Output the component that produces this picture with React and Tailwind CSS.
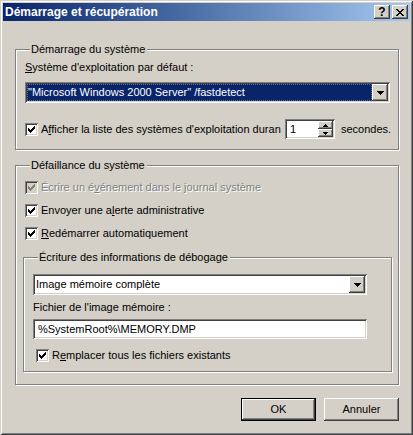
import React from 'react'

const raised = 'shadow-[inset_-1px_-1px_#404040,inset_1px_1px_#ffffff,inset_-2px_-2px_#808080,inset_2px_2px_#d4d0c8]'
const sunken = 'shadow-[inset_1px_1px_#808080,inset_-1px_-1px_#ffffff,inset_2px_2px_#404040,inset_-2px_-2px_#d4d0c8]'
const etched = 'border border-[#808080] shadow-[inset_1px_1px_#ffffff,1px_1px_#ffffff]'

function Check({ disabled }) {
  const ys = [5, 6, 7, 6, 5, 4, 3]
  return (
    <span className={`block w-[13px] h-[13px] shrink-0 ${sunken} ${disabled ? 'bg-[#d4d0c8]' : 'bg-white'}`}>
      <svg width="13" height="13" shapeRendering="crispEdges" className="block">
        {ys.map((y, i) => (
          <rect key={i} x={3 + i} y={y} width="1" height="3" fill={disabled ? '#808080' : '#000000'} />
        ))}
      </svg>
    </span>
  )
}

function CheckRow({ disabled, className = '', children }) {
  return (
    <div className={`flex items-center h-[16px] gap-[3px] ${className}`}>
      <Check disabled={disabled} />
      <span className={disabled ? 'text-[#808080] [text-shadow:1px_1px_#ffffff]' : ''}>{children}</span>
    </div>
  )
}

function Arrow() {
  return (
    <svg width="7" height="4" shapeRendering="crispEdges" className="block">
      <rect x="0" y="0" width="7" height="1" fill="#000" />
      <rect x="1" y="1" width="5" height="1" fill="#000" />
      <rect x="2" y="2" width="3" height="1" fill="#000" />
      <rect x="3" y="3" width="1" height="1" fill="#000" />
    </svg>
  )
}

function Combo({ className = '', selected, children }) {
  return (
    <div className={`flex h-[21px] p-[2px] bg-white ${sunken} ${className}`}>
      <div className={`flex-1 flex items-center pl-[1px] ${selected ? 'bg-[#0a246a] text-white outline outline-1 outline-dotted outline-[#5a6f9a] -outline-offset-1' : ''}`}>{children}</div>
      <div className={`w-[16px] h-full bg-[#d4d0c8] flex items-center justify-center ${raised}`}>
        <Arrow />
      </div>
    </div>
  )
}

function Spin() {
  return (
    <div className={`flex w-[50px] h-[20px] p-[2px] bg-white ${sunken}`}>
      <div className="flex-1 flex items-center pl-[3px]">1</div>
      <div className="w-[15px] flex flex-col">
        <div className={`flex-1 bg-[#d4d0c8] flex items-center justify-center ${raised}`}>
          <svg width="5" height="3" shapeRendering="crispEdges" className="block">
            <rect x="2" y="0" width="1" height="1" fill="#000" />
            <rect x="1" y="1" width="3" height="1" fill="#000" />
            <rect x="0" y="2" width="5" height="1" fill="#000" />
          </svg>
        </div>
        <div className={`flex-1 bg-[#d4d0c8] flex items-center justify-center ${raised}`}>
          <svg width="5" height="3" shapeRendering="crispEdges" className="block">
            <rect x="0" y="0" width="5" height="1" fill="#000" />
            <rect x="1" y="1" width="3" height="1" fill="#000" />
            <rect x="2" y="2" width="1" height="1" fill="#000" />
          </svg>
        </div>
      </div>
    </div>
  )
}

function TitleButton({ children }) {
  return (
    <div className={`w-[16px] h-[14px] bg-[#d4d0c8] flex items-center justify-center ${raised}`}>{children}</div>
  )
}

export default function App() {
  const xPix = [
    [0, 0], [1, 0], [6, 0], [7, 0],
    [1, 1], [2, 1], [5, 1], [6, 1],
    [2, 2], [3, 2], [4, 2], [5, 2],
    [3, 3], [4, 3],
    [2, 4], [3, 4], [4, 4], [5, 4],
    [1, 5], [2, 5], [5, 5], [6, 5],
    [0, 6], [1, 6], [6, 6], [7, 6],
  ]
  return (
    <div className="w-[413px] h-[435px] bg-[#d4d0c8] p-[3px] flex flex-col text-[11px] leading-[13px] text-black font-['Liberation_Sans',Arial,sans-serif] shadow-[inset_1px_1px_#d4d0c8,inset_-1px_-1px_#404040,inset_2px_2px_#ffffff,inset_-2px_-2px_#808080]">
      {/* Barre de titre */}
      <div className="h-[18px] flex items-center justify-between pl-[2px] pr-[2px] bg-linear-to-r from-[#0a246a] to-[#a6caf0]">
        <span className="text-white font-bold text-[12px]">Démarrage et récupération</span>
        <div className="flex gap-[2px]">
          <TitleButton>
            <span className="font-bold text-[12px] leading-[12px] -mt-[1px]">?</span>
          </TitleButton>
          <TitleButton>
            <svg width="8" height="7" shapeRendering="crispEdges" className="block">
              {xPix.map(([x, y], i) => (
                <rect key={i} x={x} y={y} width="1" height="1" fill="#000" />
              ))}
            </svg>
          </TitleButton>
        </div>
      </div>

      {/* Démarrage du système */}
      <fieldset className={`ml-[12px] mt-[22px] w-[384px] pl-[9px] pt-[5px] pb-[10px] ${etched}`}>
        <legend className="ml-[5px] pl-[1px] pr-[2px] bg-[#d4d0c8]">Démarrage du système</legend>
        <div>
          <span className="underline">S</span>ystème d'exploitation par défaut :
        </div>
        <Combo className="mt-[8px] w-[365px]" selected>
          "Microsoft Windows 2000 Server" /fastdetect
        </Combo>
        <div className="mt-[16px] flex items-center h-[20px]">
          <div className="w-[260px] flex items-center gap-[3px]">
            <Check />
            <span>
              A<span className="underline">f</span>ficher la liste des systèmes d'exploitation duran
            </span>
          </div>
          <Spin />
          <span className="ml-[6px]">secondes.</span>
        </div>
      </fieldset>

      {/* Défaillance du système */}
      <fieldset className={`ml-[12px] mt-[9px] w-[384px] pl-[9px] pt-[7px] pb-[12px] ${etched}`}>
        <legend className="ml-[5px] pl-[1px] pr-[2px] bg-[#d4d0c8]">Défaillance du système</legend>
        <div className="flex flex-col gap-[7px]">
          <CheckRow disabled>
            Écrire un é<span className="underline">v</span>énement dans le journal système
          </CheckRow>
          <CheckRow>
            Envoyer une a<span className="underline">l</span>erte administrative
          </CheckRow>
          <CheckRow>
            <span className="underline">R</span>edémarrer automatiquement
          </CheckRow>
        </div>

        <fieldset className={`mt-[10px] -ml-[2px] w-[369px] pl-[9px] pt-[10px] pb-[8px] ${etched}`}>
          <legend className="ml-[5px] pl-[1px] pr-[2px] bg-[#d4d0c8]">Écriture des informations de débogage</legend>
          <Combo className="w-[334px]">Image mémoire complète</Combo>
          <div className="mt-[6px]">Fichier de l'image mémoire :</div>
          <div className={`mt-[5px] w-[334px] h-[20px] bg-white flex items-center pl-[5px] ${sunken}`}>
            %SystemRoot%\MEMORY.DMP
          </div>
          <CheckRow className="mt-[8px] ml-[3px]">
            R<span className="underline">e</span>mplacer tous les fichiers existants
          </CheckRow>
        </fieldset>
      </fieldset>

      {/* Boutons */}
      <div className="ml-[12px] w-[384px] mt-[13px] flex justify-end gap-[8px]">
        <button className={`w-[75px] h-[23px] bg-[#d4d0c8] border border-black ${raised}`}>OK</button>
        <button className={`w-[75px] h-[23px] bg-[#d4d0c8] ${raised}`}>Annuler</button>
      </div>
    </div>
  )
}
